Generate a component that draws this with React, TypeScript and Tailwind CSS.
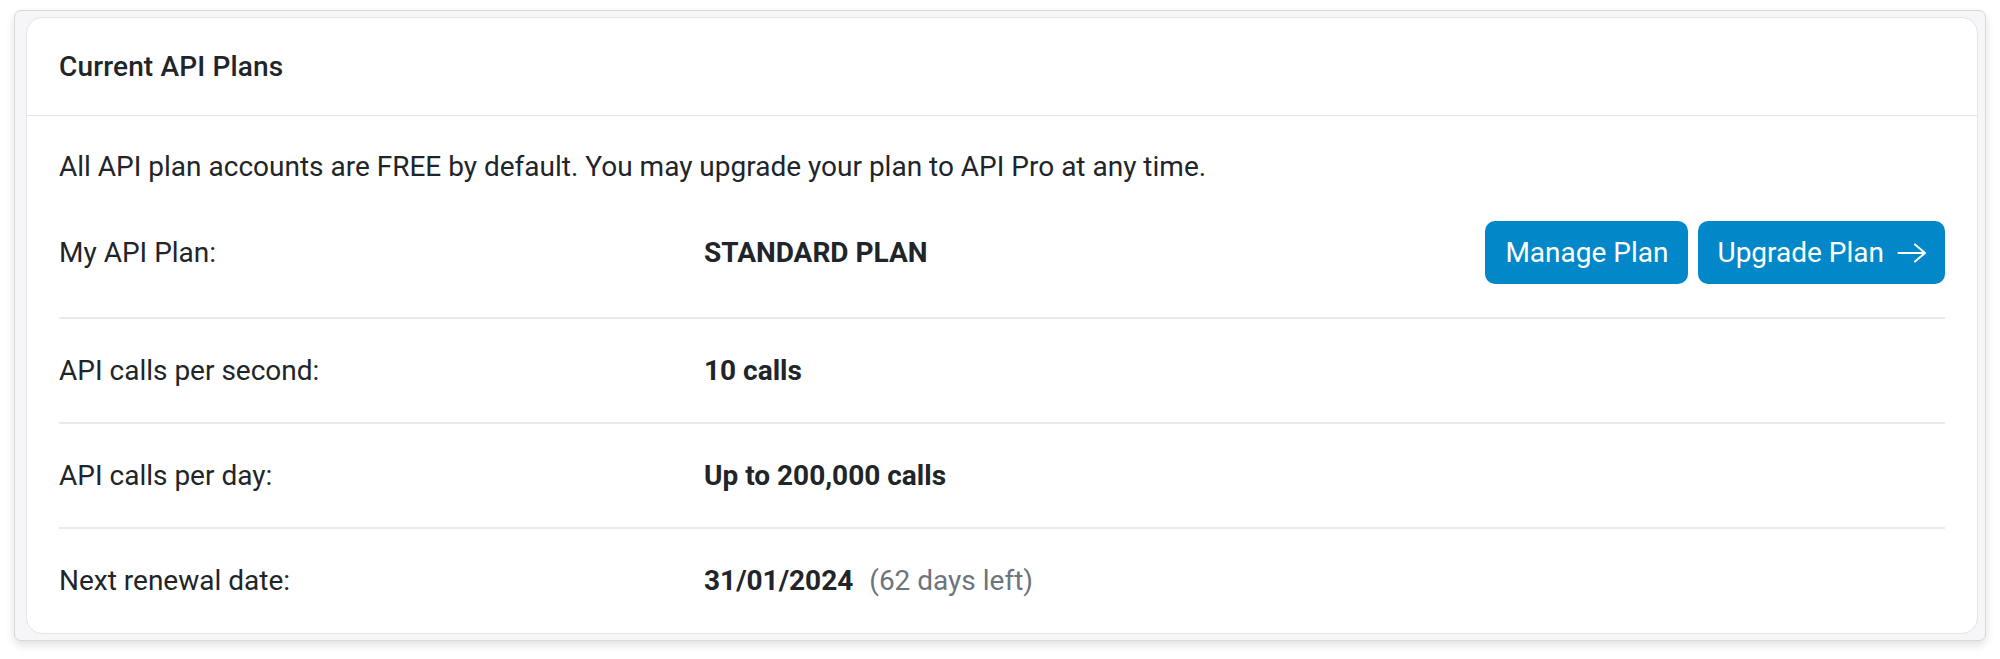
// filas de la tabla de plan
const rows = [
  { label: "API calls per second:", value: "10 calls" },
  { label: "API calls per day:", value: "Up to 200,000 calls" },
];

function LongArrow() {
  return (
    <svg width="30" height="22" viewBox="0 0 30 22" fill="none" stroke="currentColor" strokeWidth="2" strokeLinecap="round" strokeLinejoin="round">
      <path d="M1.5 11H28M18 2.5L28 11L18 19.5" />
    </svg>
  );
}

export default function App() {
  return (
    <main className="min-h-screen bg-white pt-[10px] pl-[14px] pr-[14px] font-['Roboto',sans-serif] text-[#212529]">
      {/* marco exterior */}
      <div className="rounded-[7px] border border-[#d9d9dc] bg-[#f6f6f8] pl-[11px] pr-[7px] py-[6px] shadow-[0_4px_10px_rgba(0,0,0,0.12)]">
        <div className="rounded-[16px] border border-[#e3e4ea] bg-white">
          {/* encabezado */}
          <div className="flex h-[98px] items-center border-b border-[#e4e6ea] px-[32px]">
            <h2 className="text-[28px] font-medium leading-[34px] tracking-[0.15px]">Current API Plans</h2>
          </div>

          <div className="px-[32px] text-[28px] leading-[34px]">
            <p className="pt-[34px]">
              All API plan accounts are FREE by default. You may upgrade your plan to API Pro at any time.
            </p>

            {/* plan actual + botones */}
            <div className="flex items-center pt-[37px] pb-[33px]">
              <div className="w-[645px] shrink-0">My API Plan:</div>
              <div className="flex-1 font-bold">STANDARD PLAN</div>
              <div className="flex gap-[10px]">
                <button className="h-[63px] rounded-[10px] bg-[#0288c9] px-[20px] text-white">Manage Plan</button>
                <button className="flex h-[63px] items-center gap-[13px] rounded-[10px] bg-[#0288c9] pl-[19px] pr-[18px] text-white">
                  Upgrade Plan
                  <LongArrow />
                </button>
              </div>
            </div>

            {rows.map((r) => (
              <div key={r.label} className="flex h-[105px] items-center border-t-2 border-[#e9e9ee]">
                <div className="w-[645px] shrink-0">{r.label}</div>
                <div className="font-bold">{r.value}</div>
              </div>
            ))}

            <div className="flex h-[106px] items-center border-t-2 border-[#e9e9ee]">
              <div className="w-[645px] shrink-0">Next renewal date:</div>
              <div>
                <span className="font-bold">31/01/2024</span>
                <span className="ml-[16px] text-[#6c757d]">(62 days left)</span>
              </div>
            </div>
          </div>
        </div>
      </div>
    </main>
  );
}
